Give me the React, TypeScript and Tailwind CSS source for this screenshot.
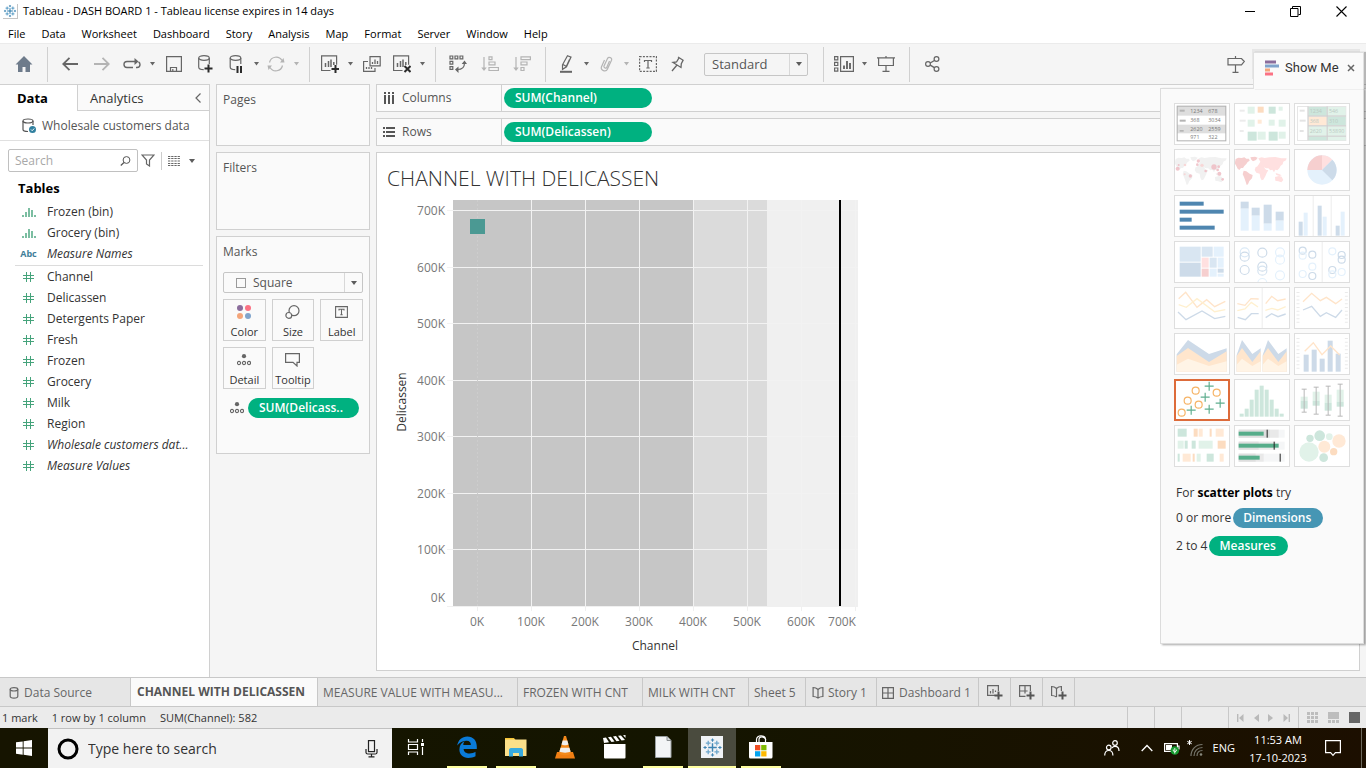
import React from "react";

type Kids = { children?: React.ReactNode };

/* ---------- shared pieces ---------- */

function Glyph({ w = 18, h = 18, className = "", children }: Kids & { w?: number; h?: number; className?: string }) {
  return (
    <svg
      width={w}
      height={h}
      viewBox={`0 0 ${w} ${h}`}
      fill="none"
      stroke="currentColor"
      strokeWidth="1.2"
      className={"shrink-0 " + className}
      aria-hidden="true"
    >
      {children}
    </svg>
  );
}

function Caret({ className = "text-[#5c5c5c]" }: { className?: string }) {
  return (
    <Glyph w={6} h={4} className={className}>
      <path d="M0 0h6L3 4z" fill="currentColor" stroke="none" />
    </Glyph>
  );
}

function Tool({ label, w = "w-8", dim = false, children }: Kids & { label: string; w?: string; dim?: boolean }) {
  return (
    <button aria-label={label} className={`flex h-8 items-center justify-center ${w} ${dim ? "text-[#b4b4b4]" : "text-[#666666]"}`}>
      {children}
    </button>
  );
}

function ToolCaret({ label, dim = false }: { label: string; dim?: boolean }) {
  return (
    <Tool label={label} w="w-3" dim={dim}>
      <Glyph w={5} h={4}>
        <path d="M0 0h5L2.5 3.5z" fill="currentColor" stroke="none" />
      </Glyph>
    </Tool>
  );
}

function ToolGroup({ children }: Kids) {
  return <div className="flex h-[35px] items-center border-r border-[#d0d0d0] pr-[7px] pl-1.5">{children}</div>;
}

function TableauMark({ size, a = "#3f85b3", b = "#6ba5ca" }: { size: number; a?: string; b?: string }) {
  return (
    <svg width={size} height={size} viewBox="0 0 22 22" fill="none" aria-hidden="true" className="shrink-0">
      <path d="M11 6.5v9M6.500 11h9" stroke={a} strokeWidth="1.500" />
      <path d="M6.500 4v5M4 6.500h5M15.500 4v5M13 6.500h5M6.500 13v5M4 15.500h5M15.500 13v5M13 15.500h5" stroke={b} strokeWidth="1.300" />
      <path d="M11 1.500v3.500M9.300 3.200h3.400M11 17v3.500M9.300 18.800h3.400M3.200 9.300v3.400M1.500 11H5M18.800 9.300v3.400M17 11h3.500" stroke={a} strokeWidth="1.100" />
    </svg>
  );
}

/* ---------- title bar and menu ---------- */

const MENUS = ["File", "Data", "Worksheet", "Dashboard", "Story", "Analysis", "Map", "Format", "Server", "Window", "Help"];

function TitleBar() {
  return (
    <header className="bg-white font-['Open_Sans',sans-serif] text-black">
      <div className="flex h-[22px] items-center pl-[3px]">
        <span className="flex size-[15px] items-center justify-center border-r border-b border-[#c4c4c4]">
          <TableauMark size={14} a="#1f73a8" b="#3f8dbd" />
        </span>
        <h1 className="ml-[5px] text-[11px] leading-4">Tableau - DASH BOARD 1 - Tableau license expires in 14 days</h1>
        <div className="ml-auto flex items-center text-black">
          <button aria-label="Minimize" className="flex h-5 w-[45px] items-center justify-center">
            <Glyph w={10} h={10}><path d="M0 5.500h10" strokeWidth="1" /></Glyph>
          </button>
          <button aria-label="Restore" className="flex h-5 w-[46px] items-center justify-center">
            <Glyph w={11} h={11}><path d="M.5 2.500h7.500v8H.5zM2.500 2.500v-2h8v8H8.500" strokeWidth="1" /></Glyph>
          </button>
          <button aria-label="Close" className="mr-0.5 flex h-5 w-[46px] items-center justify-center">
            <Glyph w={11} h={11}><path d="M.5.5l10 10M10.500.5l-10 10" strokeWidth="1.100" /></Glyph>
          </button>
        </div>
      </div>
      <nav className="flex h-[21px] items-center gap-4 pt-0.5 pl-2 text-[11px] leading-4">
        {MENUS.map((m) => (
          <button key={m}>{m}</button>
        ))}
      </nav>
    </header>
  );
}

/* ---------- toolbar ---------- */

function Toolbar() {
  return (
    <div className="flex h-[41px] items-center border-t border-[#ebebeb] bg-[#f5f5f5]">
      <div className="flex h-[35px] w-12 items-center justify-center border-r border-[#d0d0d0]">
        <button aria-label="Home" className="flex h-8 w-8 items-center justify-center text-[#6e7b8b]">
          <Glyph w={18} h={16}><path d="M9 0l8.500 8.500H15V16h-4.500v-5h-3v5H3V8.500H.5z" fill="currentColor" stroke="none" /></Glyph>
        </button>
      </div>
      <ToolGroup>
        <Tool label="Undo"><Glyph w={16} h={14}><path d="M16 7H1.500M7.500.8L1.200 7l6.300 6.200" strokeWidth="1.800" /></Glyph></Tool>
        <Tool label="Redo" dim><Glyph w={16} h={14}><path d="M0 7h14.500M8.500.8L14.800 7l-6.300 6.200" strokeWidth="1.800" /></Glyph></Tool>
        <Tool label="Replay animation" w="w-7">
          <Glyph w={18} h={12}><path d="M10 9.500H4a3 3 0 01-3-3v0a3 3 0 013-3h9M13 9.500h1a3 3 0 003-3c0-1-.5-2-1.500-2.500" strokeWidth="1.400" /><path d="M11.500 0l4 3.500-4 3.500z" fill="currentColor" stroke="none" /></Glyph>
        </Tool>
        <ToolCaret label="Replay speed" />
        <Tool label="Save"><Glyph w={16} h={16}><path d="M.6.6h14.800v14.800H.6zM4.500 15v-3.500h6V15M6.800 15v-2" /></Glyph></Tool>
        <Tool label="New data source">
          <Glyph w={16} h={18}><ellipse cx="6" cy="3" rx="5.300" ry="2.300" /><path d="M.7 3v9c0 1.600 2 2.600 5 2.600M11.300 3v6" /><path d="M10.500 9.500v8M6.500 13.500h8" stroke="#2b2b2b" strokeWidth="2" /></Glyph>
        </Tool>
        <Tool label="Pause auto updates" w="w-7">
          <Glyph w={14} h={18}><ellipse cx="6.500" cy="3" rx="5.300" ry="2.300" /><path d="M1.200 3v9c0 1.600 2 2.600 5 2.600M11.800 3v6" /><path d="M8.500 11v7M12 11v7" stroke="#2b2b2b" strokeWidth="2" /></Glyph>
        </Tool>
        <ToolCaret label="Update options" />
        <Tool label="Refresh" w="w-7" dim>
          <Glyph w={18} h={16}><path d="M2.500 6.500a6.800 6.800 0 0112.500-2M15.500 9.500a6.800 6.800 0 01-12.500 2" /><path d="M13 6.500h4.500L16.500 2zM5 9.500H.5l1 4.500z" fill="currentColor" stroke="none" /></Glyph>
        </Tool>
        <ToolCaret label="Refresh options" dim />
      </ToolGroup>
      <ToolGroup>
        <Tool label="New worksheet" w="w-7">
          <Glyph w={18} h={18}><path d="M9.500 15.500H.6V.8h15v9" /><path d="M4.500 8v4M7.500 6v6M10 4.500V12M12.800 7v3" strokeWidth="1.500" /><path d="M14.500 10v8M10.500 14h8" stroke="#2b2b2b" strokeWidth="2" /></Glyph>
        </Tool>
        <ToolCaret label="New sheet options" />
        <Tool label="Duplicate">
          <Glyph w={18} h={16}><path d="M7 .6h10.200v9.300H7zM5 5.500H.6v9.900H12V12" /><path d="M9.500 6v2M12 3.500V8M14.500 5v3M3.500 11v2M6 11v2M8.500 11v2" strokeWidth="1.300" /></Glyph>
        </Tool>
        <Tool label="Clear sheet" w="w-7">
          <Glyph w={18} h={18}><path d="M9.500 15.500H.6V.8h15v9" /><path d="M4.500 8v4M7.500 6v6M10 4.500V12M12.800 7v3" strokeWidth="1.500" /><path d="M11.500 11l6 6M17.500 11l-6 6" stroke="#2b2b2b" strokeWidth="2" /></Glyph>
        </Tool>
        <ToolCaret label="Clear options" />
      </ToolGroup>
      <ToolGroup>
        <Tool label="Swap rows and columns">
          <Glyph w={18} h={18}><path d="M1 1h2.800v2.800H1zM6 1h2.800v2.800H6zM11 1h2.800v2.800H11zM1 6.300h2.800v2.800H1zM1 11.600h2.800v2.800H1zM15.500 8c0 4-2.500 6.500-7 6.500" /><path d="M12.700 9l2.800-3.500L18 9zM9.500 11.500L6 14.500 9.500 18z" fill="currentColor" stroke="none" /></Glyph>
        </Tool>
        <Tool label="Sort ascending" dim>
          <Glyph w={18} h={16}><path d="M3 1v11M8 .8h3v2.800H8zM8 6h6v2.800H8zM8 11.500h9.400v3H8z" /><path d="M.3 11.500h5.400L3 15z" fill="currentColor" stroke="none" /></Glyph>
        </Tool>
        <Tool label="Sort descending" dim>
          <Glyph w={18} h={16}><path d="M3 1v11M8 .8h9.400v2.800H8zM8 6h6v2.800H8zM8 11.500h3v3H8z" /><path d="M.3 11.500h5.400L3 15z" fill="currentColor" stroke="none" /></Glyph>
        </Tool>
      </ToolGroup>
      <ToolGroup>
        <Tool label="Highlight" w="w-7">
          <Glyph w={14} h={18}><path d="M8.500.8l3.500 1.300-4.500 9.700-4 2.500v-4.500zM4 9.500l3.500 2M10.500 4.500l-3 6.500" /><path d="M1 16.800h12" strokeWidth="2" /></Glyph>
        </Tool>
        <ToolCaret label="Highlight options" />
        <Tool label="Group members" w="w-7" dim>
          <Glyph w={13} h={16}><path d="M4 10l3.500-7.500c1-2 5-1 4 1.800L7.500 13c-1.500 3.500-7.500 1.500-6-2.300L4.500 4M6.500 12l3-7M4 10c-.5 1.500 1.500 2.500 2.500 2" strokeWidth="1.200" /></Glyph>
        </Tool>
        <ToolCaret label="Group options" dim />
        <Tool label="Show mark labels">
          <Glyph w={18} h={16}><path d="M.6.6h16.800v14.800H.6z" strokeDasharray="2 1.300" /><path d="M5.500 6V4.500h7V6M9 4.500v7.500M7.300 12h3.400" /></Glyph>
        </Tool>
        <Tool label="Fix axes" w="w-7">
          <Glyph w={14} h={16}><path d="M7 1l5.500 3.500M8 1.800L5.500 6 2 6.500l8 5 .3-3.800 2-3.800M6 9L1 15" strokeWidth="1.300" /></Glyph>
        </Tool>
        <div className="relative mr-2 ml-3 flex h-[23px] w-[104px] items-center">
          <select aria-label="Fit" className="h-full w-full appearance-none rounded-[2px] border border-[#c6c6c6] bg-[#f5f5f5] pl-[7px] font-['Open_Sans',sans-serif] text-[13px] leading-4 text-[#555555]">
            <option>Standard</option>
          </select>
          <span className="pointer-events-none absolute inset-y-px right-px flex w-[18px] items-center justify-center border-l border-[#d8d8d8]">
            <Caret />
          </span>
        </div>
      </ToolGroup>
      <ToolGroup>
        <Tool label="Show or hide cards" w="w-7">
          <Glyph w={20} h={16}><path d="M.6.6h3.200v3.200H.6zM.6 6.300h3.200v3.200H.6zM.6 12h3.200v3.200H.6zM6.600.6h12.800v14.800H6.600z" /><path d="M10 9.500V13M13 5v8M16 7v6" strokeWidth="1.900" /></Glyph>
        </Tool>
        <ToolCaret label="Card options" />
        <Tool label="Presentation mode">
          <Glyph w={18} h={16}><path d="M0 1.800h18M1.600 2v7.500h14.800V2M9 9.500v6M5.500 15.300h7M9 0v1.500" /></Glyph>
        </Tool>
      </ToolGroup>
      <div className="flex pl-1.5">
        <Tool label="Share">
          <Glyph w={15} h={16}><circle cx="3" cy="8" r="2.400" /><circle cx="11.500" cy="3" r="2.400" /><circle cx="11.500" cy="13" r="2.400" /><path d="M5.200 7l4.200-2.500M5.200 9.200l4.200 2.400" strokeWidth="1.400" /></Glyph>
        </Tool>
      </div>
      <div className="ml-auto flex items-center">
        <Tool label="Guide">
          <Glyph w={18} h={18}><path d="M1 3.500h13.500L17.300 6.500l-2.800 3.300H1zM8.500 1v2.500M8.500 10v7M5.500 17.300h6" /></Glyph>
        </Tool>
        <div className="mr-1.5 h-[30px] w-[108px] bg-[#e6e6e6]" />
      </div>
    </div>
  );
}

/* ---------- data pane ---------- */

type Field = { name: string; kind: "bin" | "abc" | "num"; italic?: boolean };

const DIMENSIONS: Field[] = [
  { name: "Frozen (bin)", kind: "bin" },
  { name: "Grocery (bin)", kind: "bin" },
  { name: "Measure Names", kind: "abc", italic: true },
];

const MEASURES: Field[] = [
  { name: "Channel", kind: "num" },
  { name: "Delicassen", kind: "num" },
  { name: "Detergents Paper", kind: "num" },
  { name: "Fresh", kind: "num" },
  { name: "Frozen", kind: "num" },
  { name: "Grocery", kind: "num" },
  { name: "Milk", kind: "num" },
  { name: "Region", kind: "num" },
  { name: "Wholesale customers dat...", kind: "num", italic: true },
  { name: "Measure Values", kind: "num", italic: true },
];

function FieldIcon({ kind }: { kind: Field["kind"] }) {
  if (kind === "abc") return <span className="text-[9px] leading-4 font-bold text-[#417e99]">Abc</span>;
  if (kind === "bin")
    return (
      <Glyph w={14} h={10} className="text-[#45a37b]">
        <path d="M1 8v2M4 5v5M7 1v9M10 3v7M13 8v2" strokeWidth="1.400" />
      </Glyph>
    );
  return (
    <Glyph w={11} h={10} className="text-[#45a37b]">
      <path d="M3.500 0v10M7.500 0v10M0 3.500h11M0 6.500h11" strokeWidth="1" />
    </Glyph>
  );
}

function FieldRow({ field }: { field: Field }) {
  return (
    <li className="flex h-[21px] items-center">
      <span className="mr-[5px] flex w-[27px] justify-center">
        <FieldIcon kind={field.kind} />
      </span>
      <span className={`whitespace-nowrap ${field.italic ? "italic" : ""}`}>{field.name}</span>
    </li>
  );
}

function DataPane() {
  return (
    <aside className="flex w-[210px] shrink-0 flex-col border-t border-r border-[#d0d0d0] bg-white">
      <div className="flex h-[26px] text-[13px] leading-4">
        <button className="w-[77px] pr-3 font-bold text-black">Data</button>
        <button className="flex flex-1 items-center justify-between border-b border-l border-[#d0d0d0] bg-[#fafafa] pr-2 pl-3 text-[#333333]">
          Analytics
          <Glyph w={6} h={10} className="text-[#666666]"><path d="M5.500.5L1 5l4.500 4.500" /></Glyph>
        </button>
      </div>
      <div className="flex h-[30px] items-center border-b border-[#e0e0e0] pl-[22px] text-xs leading-4 text-[#555555]">
        <Glyph w={15} h={16}>
          <ellipse cx="6" cy="3" rx="5" ry="2" />
          <path d="M1 3v8.500c0 1.300 2 2 5 2M11 3v4" />
          <circle cx="10.500" cy="11.500" r="3.500" fill="#31809f" stroke="none" />
          <path d="M9 11.500l1.200 1.200 2-2.200" stroke="#ffffff" strokeWidth="1" />
        </Glyph>
        <span className="ml-[5px]">Wholesale customers data</span>
      </div>
      <div className="mt-2 flex items-center px-2">
        <div className="relative flex h-[23px] w-[130px] items-center">
          <input
            aria-label="Search fields"
            placeholder="Search"
            className="h-full w-full rounded-[2px] border border-[#c0c0c0] bg-white pl-1.5 text-xs leading-4 placeholder:text-[#a8a8a8]"
          />
          <Glyph w={11} h={10} className="pointer-events-none absolute right-[7px] text-[#555555]">
            <circle cx="6.500" cy="4" r="3.400" strokeWidth="1" />
            <path d="M4 6.500L.8 9.500" />
          </Glyph>
        </div>
        <button aria-label="Filter fields" className="ml-[3px] text-[#666666]">
          <Glyph w={14} h={13}><path d="M1 1h12L8.500 6v6l-3-2V6z" /></Glyph>
        </button>
        <span className="mx-1.5 h-[18px] w-px bg-[#cccccc]" />
        <button aria-label="View options" className="flex items-center gap-[9px] text-[#666666]">
          <Glyph w={12} h={10}><path d="M0 .5h12M0 2.500h12M0 5h12M0 7.500h12M0 9.500h12" strokeDasharray="2.300 .9" strokeWidth="1" /></Glyph>
          <Caret />
        </button>
      </div>
      <h2 className="mt-2 pl-[18px] text-[13px] leading-4 font-bold text-black">Tables</h2>
      <div className="mt-[5px] pr-1.5 pl-[15px] text-xs leading-4 text-[#333333]">
        <ul>{DIMENSIONS.map((f) => <FieldRow key={f.name} field={f} />)}</ul>
        <hr className="mt-px border-[#dcdcdc]" />
        <ul>{MEASURES.map((f) => <FieldRow key={f.name} field={f} />)}</ul>
      </div>
    </aside>
  );
}

/* ---------- cards ---------- */

function Card({ title, className = "", children }: Kids & { title: string; className?: string }) {
  return (
    <section className={"border border-[#d0d0d0] bg-[#fafafa] px-1.5 pt-[7px] text-[#555555] " + className}>
      <h2 className="text-xs leading-4">{title}</h2>
      {children}
    </section>
  );
}

function DetailGlyph() {
  return (
    <Glyph w={14} h={12}>
      <circle cx="7" cy="2.200" r="2.100" fill="currentColor" stroke="none" />
      <circle cx="2" cy="9" r="1.600" strokeWidth="1.100" />
      <circle cx="7" cy="9" r="1.600" strokeWidth="1.100" />
      <circle cx="12" cy="9" r="1.600" strokeWidth="1.100" />
    </Glyph>
  );
}

function MarkButton({ label, children }: Kids & { label: string }) {
  return (
    <button className="flex h-[42px] flex-col items-center border border-[#d0d0d0] text-[11px] leading-4 text-[#333333]">
      <span className="flex h-[25px] items-center text-[#666666]">{children}</span>
      {label}
    </button>
  );
}

function Pill({ className, children }: Kids & { className: string }) {
  return <button className={"h-5 rounded-full text-left text-xs leading-4 font-semibold text-white " + className}>{children}</button>;
}

function Cards() {
  return (
    <div className="flex w-[154px] shrink-0 flex-col gap-1.5">
      <Card title="Pages" className="h-[62px]" />
      <Card title="Filters" className="h-[78px]" />
      <Card title="Marks" className="h-[218px]">
        <div className="relative mt-3 flex h-[21px] items-center">
          <select aria-label="Mark type" className="h-full w-full appearance-none rounded-[2px] border border-[#c6c6c6] bg-[#fafafa] pl-[29px] text-xs leading-4 text-[#555555]">
            <option>Square</option>
          </select>
          <span className="pointer-events-none absolute left-[13px] size-2.5 border border-[#9a9a9a]" />
          <span className="pointer-events-none absolute inset-y-px right-px flex w-[18px] items-center justify-center border-l border-[#d8d8d8]">
            <Caret />
          </span>
        </div>
        <div className="mt-1.5 grid grid-cols-3 gap-1.5">
          <MarkButton label="Color">
            <Glyph w={14} h={14}>
              <circle cx="3" cy="3" r="3" fill="#8b6d9c" stroke="none" />
              <circle cx="11" cy="3" r="3" fill="#fb7284" stroke="none" />
              <circle cx="3" cy="11" r="3" fill="#f4a57a" stroke="none" />
              <circle cx="11" cy="11" r="3" fill="#80a4cc" stroke="none" />
            </Glyph>
          </MarkButton>
          <MarkButton label="Size">
            <Glyph w={15} h={14}><circle cx="9" cy="5.700" r="5" /><circle cx="3.800" cy="10.400" r="2.900" fill="#fafafa" /></Glyph>
          </MarkButton>
          <MarkButton label="Label">
            <Glyph w={13} h={12}><path d="M.6.6h11.800v10.800H.6zM4 4.500V3.300h5v1.200M6.500 3.300v5.400M5.300 8.800h2.400" strokeWidth="1.100" /></Glyph>
          </MarkButton>
          <MarkButton label="Detail"><DetailGlyph /></MarkButton>
          <MarkButton label="Tooltip">
            <Glyph w={15} h={14}><path d="M.6.600h13.800v8.800h-2.400v3.600L8 9.400H.6z" /></Glyph>
          </MarkButton>
        </div>
        <div className="mt-[9px] flex items-center gap-1 pl-[7px] text-[#666666]">
          <DetailGlyph />
          <Pill className="w-[111px] bg-[#00b180] pl-[11px]">SUM(Delicass..</Pill>
        </div>
      </Card>
    </div>
  );
}

/* ---------- shelves and view ---------- */

function Shelf({ label, pill, icon }: { label: string; pill: string; icon: React.ReactNode }) {
  return (
    <div className="flex h-7 shrink-0 border border-r-0 border-[#d0d0d0] bg-[#fafafa]">
      <div className="flex w-[125px] items-center gap-[7px] border-r border-[#d0d0d0] pl-1.5 text-xs leading-4 text-[#555555]">
        {icon}
        {label}
      </div>
      <div className="flex items-center pl-0.5">
        <Pill className="w-[148px] bg-[#00b180] pl-[11px]">{pill}</Pill>
      </div>
    </div>
  );
}

const Y_TICKS = [
  { label: "700K", y: 210 }, { label: "600K", y: 267 }, { label: "500K", y: 323 }, { label: "400K", y: 380 },
  { label: "300K", y: 436 }, { label: "200K", y: 493 }, { label: "100K", y: 549 },
];
const X_TICKS = [
  { label: "0K", x: 477 }, { label: "100K", x: 531 }, { label: "200K", x: 585 }, { label: "300K", x: 639 },
  { label: "400K", x: 693 }, { label: "500K", x: 747 }, { label: "600K", x: 801 }, { label: "700K", x: 855 },
];

function Chart() {
  return (
    <svg
      width="480"
      height="460"
      viewBox="387 196 480 460"
      role="img"
      aria-label="Delicassen by Channel scatter plot"
      shapeRendering="crispEdges"
      className="font-['Open_Sans',sans-serif] text-xs"
    >
      <rect x="453" y="200" width="241" height="406" fill="#c6c6c6" />
      <rect x="694" y="200" width="73" height="406" fill="#dbdbdb" />
      <rect x="767" y="200" width="91" height="406" fill="#f0f0f0" />
      {Y_TICKS.map((t) => (
        <g key={t.label}>
          <rect x="447" y={t.y} width="411" height="1" fill="#f2f2f2" />
          <text x="445" y={t.y + 5} textAnchor="end" fill="#787878">{t.label}</text>
        </g>
      ))}
      <text x="445" y="602" textAnchor="end" fill="#787878">0K</text>
      {X_TICKS.map((t, i) => (
        <g key={t.label}>
          {i > 0 && <rect x={t.x} y="200" width="1" height="406" fill="#f2f2f2" />}
          <rect x={t.x} y="606" width="1" height="5" fill="#f0f0f0" />
          <text x={i === 7 ? 842 : t.x} y="626" textAnchor="middle" fill="#787878">{t.label}</text>
        </g>
      ))}
      <path d="M477.500 200v406" stroke="#cdcdcd" strokeDasharray="2 2" />
      <rect x="447" y="606" width="411" height="1" fill="#f0f0f0" />
      <rect x="839" y="200" width="2" height="406" fill="#000000" />
      <rect x="470" y="219" width="15" height="15" fill="#4b9993" />
      <text x="655" y="650" textAnchor="middle" fill="#333333">Channel</text>
      <text x="406" y="402" textAnchor="middle" fill="#333333" transform="rotate(-90 406 402)">Delicassen</text>
    </svg>
  );
}

function Sheet() {
  return (
    <main className="flex min-w-0 flex-1 flex-col gap-1.5">
      <Shelf
        label="Columns"
        pill="SUM(Channel)"
        icon={<Glyph w={12} h={12}><path d="M2 0v2M6 0v2M10 0v2M2 3v9M6 3v9M10 3v9" strokeWidth="2" /></Glyph>}
      />
      <Shelf
        label="Rows"
        pill="SUM(Delicassen)"
        icon={<Glyph w={12} h={12}><path d="M0 2h2M0 6h2M0 10h2M3 2h9M3 6h9M3 10h9" strokeWidth="2" /></Glyph>}
      />
      <section className="mr-1.5 mb-1.5 flex-1 border border-[#d0d0d0] bg-white pl-2.5">
        <h2 className="pt-[11px] text-[21px] leading-7 font-light text-[#333333]">CHANNEL WITH DELICASSEN</h2>
        <div className="mt-1">
          <Chart />
        </div>
      </section>
    </main>
  );
}

/* ---------- show me ---------- */

const LAND_WEST =
  "M48 208l8-4 10 1 8-2 6 4 8 0 2 6-6 4-4 6-6 6-4 6-6 0-5 6-5-4-4-8-5-8zM92 203l14-2 8 3-5 7-9 4-5-5zM72 243l8 2 10 7 9 4-2 10-8 8-4 10-4 2-3-10-5-14-4-8z";
const LAND_EAST =
  "M116 206l10-3 9 2 14-2 18-1 18 4 16 0-2 6-8 4-2 8-6 4-4 8-6 6-6-2-4 8-5-8-6 2-6-6-7 0-6-3-9-1-8 4-4-5 6-8 4-7zM108 232l14-3 10 3 7 8 7 2-5 8-4 10-6 10-5 2-4-8-2-12-10-3-5-8zM166 262l12-3 8 2 5 10-6 7-9-3-9-2zM168 250l10 3 8 4-6 2-10-3z";

function WorldMap({ dx, west, east }: { dx: number; west: string; east: string }) {
  return (
    <g transform={`translate(${dx} 0)`}>
      <path d={LAND_WEST} fill={west} />
      <path d={LAND_EAST} fill={east} />
    </g>
  );
}

type Box = [number, number, number, number, string];
function Boxes({ items }: { items: Box[] }) {
  return (
    <>
      {items.map(([x, y, w, h, f], i) => (
        <rect key={i} x={x} y={y} width={w} height={h} fill={f} />
      ))}
    </>
  );
}

function Rings({ items, r }: { items: [number, number, string][]; r: number }) {
  return (
    <>
      {items.map(([x, y, c], i) => (
        <circle key={i} cx={x} cy={y} r={r} fill="none" stroke={c} strokeWidth="3.500" />
      ))}
    </>
  );
}

function Lines({ items }: { items: [string, string][] }) {
  return (
    <>
      {items.map(([p, c], i) => (
        <polyline key={i} points={p} fill="none" stroke={c} strokeWidth="4" />
      ))}
    </>
  );
}

function Numbers({ rows, xs, ys, fill }: { rows: string[][]; xs: number[]; ys: number[]; fill: string }) {
  return (
    <g fill={fill} fontSize="16" className="font-['Open_Sans',sans-serif]">
      {rows.map((r, i) => r.map((t, j) => <text key={t} x={xs[j]} y={ys[i]}>{t}</text>))}
    </g>
  );
}

const G1 = "#e1f2e9", G2 = "#cde6dc", O1 = "#ffe9d6", O2 = "#fcdcc0", B1 = "#e4f1fc", B2 = "#cddbe9", B3 = "#d9e6f2", R1 = "#ffe0e0", R2 = "#f6cfcf";
const OR = "#ffe4c9", YE = "#fff0cf", BL = "#cddae8";

type Thumb = { name: string; x: number; y: number; art: React.ReactNode };

const THUMBS: Thumb[] = [
  {
    name: "Text table", x: 43, y: 40,
    art: (
      <>
        <Boxes items={[[52, 49, 147, 105, "#ffffff"], [52, 49, 147, 29, "#dedede"], [52, 105, 147, 26, "#dedede"], [60, 60, 15, 6, "#b5b5b5"], [60, 90, 18, 6, "#b5b5b5"], [60, 121, 12, 5, "#b5b5b5"]]} />
        <rect x="52.500" y="49.500" width="146" height="104" fill="none" stroke="#b0b0b0" strokeWidth="3" />
        <Numbers rows={[["1234", "678"], ["368", "3034"], ["2620", "2559"], ["971", "322"]]} xs={[92, 146]} ys={[70, 98, 124, 148]} fill="#777777" />
      </>
    ),
  },
  {
    name: "Heat map", x: 223, y: 40,
    art: (
      <Boxes items={[[240, 60, 15, 6, "#ececec"], [240, 90, 18, 6, "#ececec"], [240, 121, 12, 6, "#ececec"], [264, 51, 21, 21, G1], [294, 51, 18, 18, O2], [327, 51, 21, 21, G2], [357, 51, 12, 12, G1], [264, 90, 21, 21, G1], [294, 90, 12, 12, O1], [327, 90, 18, 18, G1], [357, 90, 21, 21, G1], [264, 126, 27, 27, G2], [294, 126, 24, 24, G1], [327, 126, 27, 27, G2], [357, 126, 21, 21, G1]]} />
    ),
  },
  {
    name: "Highlight table", x: 403, y: 40,
    art: (
      <>
        <Boxes items={[[412, 49, 148, 105, "#e6e6e6"], [415, 52, 29, 99, "#ffffff"], [447, 52, 54, 26, G2], [504, 52, 54, 26, G1], [447, 81, 54, 26, O1], [504, 81, 54, 26, G2], [447, 110, 54, 28, G1], [504, 110, 54, 28, G1], [447, 141, 54, 11, G2], [504, 141, 54, 11, G1], [420, 60, 15, 6, "#e4e4e4"], [420, 90, 18, 6, "#e4e4e4"], [420, 121, 12, 6, "#e4e4e4"]]} />
        <path d="M445 79h114M445 108.500h114M445 139.500h114M445 50v102M502.500 50v102" stroke="#cfcfcf" strokeWidth="3" />
        <Numbers rows={[["1234", "546"], ["368", "310"], ["2620", "53890"]]} xs={[450, 508]} ys={[69, 99, 130]} fill="#bccac3" />
      </>
    ),
  },
  {
    name: "Symbol map", x: 43, y: 178,
    art: (
      <>
        <WorldMap dx={0} west="#f1f1f1" east="#f1f1f1" />
        {[[54, 237, 6], [57, 226, 3], [76, 226, 4], [116, 214, 5], [113, 225, 4], [127, 227, 5], [163, 232, 8], [177, 231, 4], [174, 241, 4], [179, 252, 6], [138, 244, 4], [75, 254, 3], [92, 259, 5], [189, 269, 4]].map(([x, y, r], i) => (
          <circle key={i} cx={x} cy={y} r={r} fill={i % 3 === 2 && i !== 8 ? "#f8d2d2" : "#eebcc3"} fillOpacity="0.850" />
        ))}
      </>
    ),
  },
  { name: "Filled map", x: 223, y: 178, art: <WorldMap dx={180} west={R2} east={R1} /> },
  {
    name: "Pie chart", x: 403, y: 178,
    art: (
      <>
        <circle cx="487" cy="241" r="44" fill={B1} />
        <path d="M487 241V197a44 44 0 00-44 44z" fill={R2} />
        <path d="M487 241V197a44 44 0 0131 13z" fill={R1} />
        <path d="M487 241l31-31a44 44 0 010 62z" fill={B2} />
      </>
    ),
  },
  { name: "Horizontal bars", x: 43, y: 316, art: <Boxes items={[[60, 336, 72, 12, "#4f86b0"], [60, 360, 132, 12, "#4f86b0"], [60, 384, 36, 12, "#4f86b0"], [60, 408, 105, 12, "#4f86b0"]]} /> },
  {
    name: "Stacked bars", x: 223, y: 316,
    art: <Boxes items={[[243, 336, 24, 21, B2], [243, 357, 24, 66, B1], [276, 354, 24, 24, B2], [276, 378, 24, 45, B1], [312, 345, 24, 57, B2], [312, 402, 24, 21, B1], [348, 366, 24, 27, B2], [348, 393, 24, 30, B1]]} />,
  },
  {
    name: "Side-by-side bars", x: 403, y: 316,
    art: <Boxes items={[[459, 318, 3, 122, "#ececec"], [513, 318, 3, 122, "#ececec"], [417, 396, 12, 42, B2], [432, 369, 12, 69, B1], [474, 348, 12, 90, B2], [489, 381, 12, 57, B1], [528, 408, 12, 30, B2], [543, 366, 12, 72, B1]]} />,
  },
  {
    name: "Treemap", x: 43, y: 454,
    art: <Boxes items={[[60, 471, 63, 45, B3], [60, 519, 63, 42, B2], [126, 471, 33, 30, B3], [162, 471, 30, 30, B1], [126, 504, 21, 30, R1], [150, 504, 21, 30, B3], [174, 504, 18, 30, B1], [126, 537, 21, 24, R2], [150, 537, 21, 24, B1], [174, 537, 18, 12, B2], [174, 552, 18, 9, B1]]} />,
  },
  {
    name: "Circle views", x: 223, y: 454,
    art: <Rings r={13.5} items={[[255, 488, "#dbeaf7"], [255, 501, B2], [255, 541, B2], [308, 489, B2], [308, 531, B2], [308, 543, "#d5e3f0"], [308, 580, B1], [361, 488, B1], [361, 510, B1], [361, 557, B1]]} />,
  },
  {
    name: "Side-by-side circles", x: 403, y: 454,
    art: (
      <>
        <rect x="486" y="456" width="3" height="122" fill="#ececec" />
        <Rings r={10.5} items={[[429, 483, B2], [429, 498, B1], [458, 495, B2], [458, 531, B1], [429, 553, B1], [458, 559, B2], [518, 485, B1], [546, 496, B2], [546, 510, B2], [518, 541, B2], [518, 554, B1], [546, 547, B1]]} />
      </>
    ),
  },
  {
    name: "Lines (continuous)", x: 43, y: 7,
    art: <Lines items={[["57,42 78,23 112,68 141,45 165,66 197,50", OR], ["57,60 80,68 112,42 165,81 197,75", YE], ["55,82 79,105 127,79 165,102 197,95", BL]]} />,
  },
  {
    name: "Lines (discrete)", x: 223, y: 7,
    art: (
      <>
        <rect x="306" y="9" width="3" height="122" fill="#ececec" />
        <Lines items={[["233,57 256,62 274,42 297,43", OR], ["233,78 256,73 275,53 295,67", YE], ["234,98 257,105 275,87 297,87", BL], ["318,57 336,35 354,48 378,43", OR], ["317,77 337,71 354,76 378,66", YE], ["318,99 336,87 355,96 378,88", BL]]} />
      </>
    ),
  },
  {
    name: "Dual lines", x: 403, y: 7,
    art: (
      <>
        <path d="M415 22v94M560 22v94" stroke="#eaeaea" strokeWidth="9" strokeDasharray="3 8.200" />
        <Lines items={[["430,51 456,26 482,48 500,38 528,57 547,43", OR], ["430,76 456,65 482,95 500,84 528,98 547,76", BL]]} />
      </>
    ),
  },
  {
    name: "Area (continuous)", x: 43, y: 145,
    art: (
      <>
        <path d="M51 209l34-43 63 42 53-17v70H51z" fill={BL} />
        <path d="M51 214l34-24 63 42 53-32v61H51z" fill="#ffe6cd" />
        <path d="M51 240l34-18 63 22 53-14v31H51z" fill="#fff4e6" />
      </>
    ),
  },
  {
    name: "Area (discrete)", x: 223, y: 145,
    art: (
      <>
        {[231, 309].map((x) => (
          <g key={x} transform={`translate(${x} 0)`}>
            <path d="M0 211l16-45 31 42 25-17v70H0z" fill={BL} />
            <path d="M0 214l16-24 31 42 25-32v61H0z" fill="#ffe6cd" />
            <path d="M0 240l16-18 31 22 25-14v31H0z" fill="#fff4e6" />
          </g>
        ))}
      </>
    ),
  },
  {
    name: "Dual combination", x: 403, y: 145,
    art: (
      <>
        <path d="M415 160v94M560 160v94" stroke="#eaeaea" strokeWidth="9" strokeDasharray="3 8.200" />
        <Boxes items={[[432, 210, 15, 51, BL], [456, 195, 15, 66, BL], [480, 222, 15, 39, BL], [504, 168, 15, 93, BL], [528, 207, 15, 54, BL]]} />
        <Lines items={[["435,200 461,174 487,210 513,184 540,211", OR]]} />
      </>
    ),
  },
  {
    name: "Scatter plots", x: 43, y: 283,
    art: (
      <>
        <Rings r={10.5} items={[[66, 384, "#f6b365"], [84, 348, "#f6b365"], [108, 318, "#f6b365"], [117, 360, "#f6b365"], [171, 324, "#f6b365"]]} />
        <path d="M135 304.500h27M148.500 291v27M123 337.500h27M136.500 324v27M168 355.500h27M181.500 342v27M135 373.500h27M148.500 360v27M81 376.500h27M94.500 363v27" stroke="#5fae8f" strokeWidth="3.500" />
      </>
    ),
  },
  {
    name: "Histogram", x: 223, y: 283,
    art: <Boxes items={[[240, 387, 12, 9, G2], [255, 372, 12, 24, G2], [270, 345, 12, 51, G2], [285, 315, 12, 81, G2], [300, 303, 12, 93, G2], [315, 315, 12, 81, G2], [330, 345, 12, 51, G2], [345, 372, 12, 24, G2], [360, 387, 12, 9, G2]]} />,
  },
  {
    name: "Box-and-whisker plot", x: 403, y: 283,
    art: (
      <>
        <Boxes items={[[423, 336, 21, 12, G1], [423, 348, 21, 24, G2], [459, 321, 21, 27, G1], [459, 348, 21, 15, G2], [495, 330, 21, 24, G1], [495, 354, 21, 24, G2], [531, 315, 21, 36, G1], [531, 351, 21, 15, G2]]} />
        <path d="M433.500 313v69M426 313.500h15M426 382.500h15M469.500 307v81M462 307.500h15M462 388.500h15M505.500 304v87M498 304.500h15M498 391.500h15M541.500 298v96M534 298.500h15M534 394.500h15" stroke="#b8b8b8" strokeWidth="3" />
      </>
    ),
  },
  {
    name: "Gantt", x: 43, y: 421,
    art: <Boxes items={[[54, 432, 27, 24, G2], [102, 432, 12, 24, O2], [117, 432, 12, 24, O1], [150, 432, 6, 24, O2], [168, 432, 24, 24, O1], [54, 468, 18, 24, G1], [75, 468, 9, 24, G2], [96, 468, 12, 24, G2], [117, 468, 42, 24, G1], [174, 468, 24, 24, O2], [54, 507, 6, 24, G2], [69, 507, 24, 24, O1], [99, 507, 6, 24, O2], [111, 507, 12, 24, G1], [141, 507, 21, 24, G2], [180, 507, 12, 24, O1]]} />,
  },
  {
    name: "Bullet graphs", x: 223, y: 421,
    art: (
      <Boxes items={[[237, 435, 138, 24, "#f5f6f7"], [237, 435, 120, 24, "#e9e9e9"], [237, 435, 93, 24, "#dedede"], [237, 471, 138, 24, "#f5f6f7"], [237, 471, 111, 24, "#e9e9e9"], [237, 471, 60, 24, "#dedede"], [237, 507, 138, 24, "#f5f6f7"], [237, 507, 75, 24, "#e9e9e9"], [237, 507, 51, 24, "#dedede"], [237, 441, 75, 12, "#56ad8a"], [237, 477, 120, 12, "#56ad8a"], [237, 513, 63, 12, "#56ad8a"], [321, 435, 3, 24, "#222222"], [342, 471, 3, 24, "#222222"], [360, 507, 3, 24, "#222222"]]} />
    ),
  },
  {
    name: "Packed bubbles", x: 403, y: 421,
    art: (
      <>
        <circle cx="448" cy="502" r="29" fill={G1} /><circle cx="451" cy="461" r="11" fill={G2} /><circle cx="480" cy="453" r="16" fill={G2} />
        <circle cx="509" cy="456" r="10" fill={G1} /><circle cx="538" cy="469" r="20" fill={O1} /><circle cx="494" cy="486" r="18" fill={O1} />
        <circle cx="522" cy="501" r="11" fill={O2} /><circle cx="492" cy="519" r="13" fill={G2} />
      </>
    ),
  },
];

function ShowMe() {
  return (
    <section aria-label="Show Me" className="absolute top-[52px] right-0.5 flex w-[204px] flex-col text-xs leading-4 text-[#333333]">
      <div className="relative z-10 flex h-[37px] w-[111px] items-center self-end border border-b-0 border-[#e0e0e0] bg-[#fafafa] pb-1.5 pl-[11px] shadow-[2px_0_1px_rgba(0,0,0,0.250)]">
        <Glyph w={14} h={16}>
          <path d="M0 2h11" stroke="#8b6d9c" strokeWidth="3" />
          <path d="M0 6h14" stroke="#80a4cc" strokeWidth="3" />
          <path d="M0 10h5" stroke="#f4a57a" strokeWidth="3" />
          <path d="M0 14h8" stroke="#fb7284" strokeWidth="3" />
        </Glyph>
        <h2 className="ml-1.5 font-['Roboto',sans-serif] text-[13px] leading-4">Show Me</h2>
        <button aria-label="Close Show Me" className="ml-2 text-[#666666]">
          <Glyph w={8} h={8}><path d="M1 1l6 6M7 1L1 7" strokeWidth="1.500" /></Glyph>
        </button>
      </div>
      <div className="-mt-px h-[556px] border border-[#dcdcdc] bg-[#fafafa] px-[13px] pt-3.5 shadow-[2px_1px_2px_rgba(0,0,0,0.350)]">
        <div className="grid grid-cols-3 gap-1">
          {THUMBS.map((t) => (
            <button
              key={t.name}
              aria-label={t.name}
              className={`h-[42px] overflow-hidden bg-white ${t.name === "Scatter plots" ? "border-2 border-[#dd6b3a]" : "border border-[#dedede]"}`}
            >
              <svg
                width="100%"
                height="100%"
                viewBox={t.name === "Scatter plots" ? `${t.x + 6} ${t.y + 6} 156 114` : `${t.x + 3} ${t.y + 3} 162 120`}
                aria-hidden="true"
              >
                {t.art}
              </svg>
            </button>
          ))}
        </div>
        <div className="pt-[18px] pl-0.5">
          <p>For <b className="font-bold text-black">scatter plots</b> try</p>
          <p className="mt-[7px] flex items-center gap-0.5">0 or more <Pill className="w-[90px] bg-[#4696b4] pl-2.5">Dimensions</Pill></p>
          <p className="mt-2 flex items-center gap-0.5">2 to 4 <Pill className="w-[79px] bg-[#00b180] pl-2.5">Measures</Pill></p>
        </div>
      </div>
    </section>
  );
}

/* ---------- sheet tabs and status ---------- */

const BOOK = "M.6 1.500C2 1.500 4 2 5.500 3.500 7 2 9 1.500 10.400 1.500v9C9 10.500 7 11 5.500 12 4 11 2 10.500.6 10.500zM5.500 3.500V12";
const DASH = "M.6.6h10.800v10.800H.6zM6 .6v10.800M.6 6h10.800";

function SheetTab({ w, children }: Kids & { w: string }) {
  return <button className={`flex items-center gap-1 border-r border-[#c8c8c8] pt-px pl-[5px] whitespace-nowrap ${w}`}>{children}</button>;
}

function SheetTabs() {
  return (
    <nav className="flex h-[30px] border-y border-[#c8c8c8] bg-[#e6e6e6] text-xs leading-4 text-[#666666]">
      <button className="flex w-[131px] items-center gap-[5px] border-r border-[#c8c8c8] pt-px pl-[9px]">
        <Glyph w={10} h={12}><ellipse cx="5" cy="2.300" rx="3.800" ry="1.700" /><path d="M1.200 2.300v7c0 1 1.500 1.800 3.800 1.800s3.800-.8 3.800-1.800v-7" /></Glyph>
        Data Source
      </button>
      <button className="w-[187px] border-r border-[#c8c8c8] bg-[#fafafa] pl-1.5 text-left font-bold whitespace-nowrap text-[#555555]">CHANNEL WITH DELICASSEN</button>
      <SheetTab w="w-[200px]">MEASURE VALUE WITH MEASU...</SheetTab>
      <SheetTab w="w-[125px]">FROZEN WITH CNT</SheetTab>
      <SheetTab w="w-[106px]">MILK WITH CNT</SheetTab>
      <SheetTab w="w-[57px]">Sheet 5</SheetTab>
      <SheetTab w="w-[71px]"><Glyph w={13} h={13}><path d={BOOK} transform="translate(1.500 0)" /></Glyph>Story 1</SheetTab>
      <SheetTab w="w-[102px]"><Glyph w={13} h={12}><path d={DASH} /></Glyph>Dashboard 1</SheetTab>
      {[
        { label: "New Worksheet", art: <><path d="M8 10.400H.6V.6h10.800V6" /><path d="M3.500 6v2.500M6 4v4.500M8.500 5.500V7" /></> },
        { label: "New Dashboard", art: <path d="M6.500 11.400H.6V.6h10.800V6M6 .6v8M.6 6h8" /> },
        { label: "New Story", art: <path d="M5.500 12C4 11 2 10.500.6 10.500v-9C2 1.500 4 2 5.500 3.500 7 2 9 1.500 10.400 1.500V6M5.500 3.500V12" /> },
      ].map((n) => (
        <button key={n.label} aria-label={n.label} className="flex w-8 items-center justify-center border-r border-[#c8c8c8]">
          <Glyph w={16} h={15}>{n.art}<path d="M11.500 6.500v8M7.500 10.500h8" stroke="#555555" strokeWidth="2" /></Glyph>
        </button>
      ))}
    </nav>
  );
}

function StatusBar() {
  return (
    <footer className="flex h-[21px] items-stretch bg-[#ebebeb] text-[11px] leading-4 text-[#333333]">
      <div className="flex items-center gap-3.5 pl-0.5">
        <span>1 mark</span>
        <span>1 row by 1 column</span>
        <span>SUM(Channel): 582</span>
      </div>
      <div className="ml-auto w-[27px] border-l border-[#c8c8c8]" />
      <div className="w-[27px] border-l border-[#c8c8c8]" />
      <div className="w-[47px] border-l border-[#c8c8c8]" />
      <div className="flex w-[71px] items-center justify-between border-x border-[#c8c8c8] px-2 text-[#b9b9b9]">
        <Glyph w={7} h={8}><path d="M.7 0v8" strokeWidth="1.400" /><path d="M6.500 0v8L2 4z" fill="currentColor" stroke="none" /></Glyph>
        <Glyph w={5} h={8}><path d="M5 0v8L0 4z" fill="currentColor" stroke="none" /></Glyph>
        <Glyph w={5} h={8}><path d="M0 0v8l5-4z" fill="currentColor" stroke="none" /></Glyph>
        <Glyph w={7} h={8}><path d="M6.300 0v8" strokeWidth="1.400" /><path d="M.5 0v8L5 4z" fill="currentColor" stroke="none" /></Glyph>
      </div>
      <div className="flex w-[67px] items-center gap-2.5 pl-2">
        <Glyph w={11} h={11} className="text-[#bdbdbd]"><path d="M0 1.500h11M0 5.500h11M0 9.500h11" strokeWidth="3" strokeDasharray="3 1" /></Glyph>
        <Glyph w={11} h={11} className="text-[#bdbdbd]"><path d="M0 3.500h11" strokeWidth="7" /><path d="M0 9.500h11" strokeWidth="3" strokeDasharray="3 1" /></Glyph>
        <span className="size-[11px] bg-[#666666]" />
      </div>
    </footer>
  );
}

/* ---------- taskbar ---------- */

function TaskButton({ label, w, bar = false, active = false, children }: Kids & { label: string; w: string; bar?: boolean; active?: boolean }) {
  return (
    <button
      aria-label={label}
      className={`flex h-full items-center justify-center border-b-2 ${w} ${bar ? "border-[#ffffa0]" : "border-transparent"} ${active ? "bg-[#4a4b3e]" : ""}`}
    >
      {children}
    </button>
  );
}

function Taskbar() {
  return (
    <div className="flex h-10 items-center bg-linear-to-r from-[#161400] via-[#141500] to-[#1c0f00] font-['Open_Sans',sans-serif] text-white">
      <button aria-label="Start" className="flex h-full w-12 items-center justify-center">
        <Glyph w={16} h={16}><path d="M0 2.300L6.700 1.400v6.200H0zM7.600 1.300L16 0v7.600H7.600zM0 8.500h6.700v6.200L0 13.800zM7.600 8.500H16V16l-8.400-1.200z" fill="#ffffff" stroke="none" /></Glyph>
      </button>
      <div className="flex h-full w-[344px] items-center border-t border-[#c0c0c0] bg-[#f2f2f2] pr-3.5 pl-[9px]">
        <Glyph w={22} h={22} className="text-black"><circle cx="11" cy="11" r="9" strokeWidth="3" /></Glyph>
        <input aria-label="Search Windows" placeholder="Type here to search" className="ml-[9px] min-w-0 flex-1 bg-transparent text-sm leading-5 placeholder:text-[#333333]" />
        <Glyph w={13} h={18} className="text-[#222222]"><rect x="3.500" y=".6" width="6" height="11" /><path d="M1 9v3.500c0 1 .8 1.500 1.800 1.500h7.400c1 0 1.800-.5 1.800-1.500V9M6.500 14v2.500M3.500 16.800h6" /></Glyph>
      </div>
      <TaskButton label="Task View" w="w-12">
        <Glyph w={18} h={16}><path d="M1.500 0v3h9V0M1.500 16v-3h9v3M1.500 5.500h9v5h-9zM15.500 0v3M15.500 8v8" /><path d="M14 4h3v3h-3z" fill="currentColor" stroke="none" /></Glyph>
      </TaskButton>
      <span className="w-[7px]" />
      <TaskButton label="Edge" w="w-10" bar>
        <svg width="22" height="22" viewBox="0 0 22 22" aria-hidden="true">
          <path fill="#0a7bd8" d="M1.200 9.600C2 4 6 .4 11.300.4c6 0 9.500 4.300 9.500 10v2.500H7.600c.2 3 2.700 4.500 5.900 4.500 2.300 0 4.400-.6 6-1.700v4.600c-2 1.200-4.500 1.700-7.200 1.700-5.500 0-8.900-3.400-8.900-8.400 0-4 2.100-7 5.300-8.500-1.100 1.300-1.300 2.700-1.400 4h7.600c0-2.700-1.300-4.300-4.200-4.300-4 0-7.200 2-9.500 4.800z" />
        </svg>
      </TaskButton>
      <span className="w-[9px]" />
      <TaskButton label="File Explorer" w="w-10" bar>
        <svg width="22" height="19" viewBox="0 0 22 19" aria-hidden="true">
          <path fill="#f5c536" d="M0 0h9l1.500 2H0z" /><rect y="1.500" width="21.500" height="16.500" fill="#fbe08a" /><path fill="#38abe0" d="M4 18.500V12c0-1 .7-2 2-2h10c1.300 0 2 1 2 2v6.500h-4V15H8v3.500z" />
        </svg>
      </TaskButton>
      <span className="w-[9px]" />
      <TaskButton label="VLC" w="w-10">
        <svg width="20" height="24" viewBox="0 0 20 24" aria-hidden="true">
          <path fill="#f07f13" d="M2 17h16l2 6.500H0z" /><path fill="#f48a1c" d="M9 1h2l5 17c-1 3-11 3-12 0z" /><path fill="#efefef" d="M7.700 5.500h4.600l1.200 4c-1.500 1-5.500 1-7 0zM5.600 12.700h8.800l1.200 3.800c-2 1.500-9 1.500-11.200 0z" />
        </svg>
      </TaskButton>
      <span className="w-[9px]" />
      <TaskButton label="Movies" w="w-10">
        <svg width="23" height="24" viewBox="0 0 23 24" fill="#ffffff" aria-hidden="true">
          <path d="M1 9h21.500v13.500a1 1 0 01-1 1H2a1 1 0 01-1-1zM0 3l3-.5 3 4.800-5 .7zM5 2.200l3-.4 3.500 4.700-3 .4zM10 1.500l3-.4 3.500 4.700-3 .4zM15 .8l3-.4L22 5l-3.500.5zM20 .2l2.500-.2v3z" />
        </svg>
      </TaskButton>
      <span className="w-[9px]" />
      <TaskButton label="Document" w="w-10" bar>
        <svg width="17" height="22" viewBox="0 0 17 22" aria-hidden="true">
          <path d="M.5.5h11.500l4 4v17H.5z" fill="#f3f5f6" stroke="#9aa0a2" /><path d="M12 .5v4h4" fill="#d3d8da" stroke="#8a8f91" />
        </svg>
      </TaskButton>
      <span className="w-[5px]" />
      <TaskButton label="Tableau" w="w-12" bar active>
        <span className="flex size-[22px] items-center justify-center bg-[#f0f3f6]"><TableauMark size={21} /></span>
      </TaskButton>
      <span className="w-[5px]" />
      <TaskButton label="Microsoft Store" w="w-10" bar>
        <svg width="24" height="24" viewBox="0 0 24 24" aria-hidden="true">
          <path d="M7.500 8V4.500c0-5 9-5 9 0V8M10 8V4.500c0-3.500 5-3.500 7 0" fill="none" stroke="#ffffff" strokeWidth="1.200" />
          <path d="M0 7h23.500v15a1.500 1.500 0 01-1.500 1.500H1.500A1.500 1.500 0 010 22z" fill="#ffffff" />
          <path d="M6 10h5.300v5.300H6z" fill="#f04e23" /><path d="M12.200 10h5.300v5.300h-5.300z" fill="#80bb03" /><path d="M6 16.200h5.300v5.300H6z" fill="#04a4ef" /><path d="M12.200 16.200h5.300v5.300h-5.300z" fill="#fdb900" />
        </svg>
      </TaskButton>
      <div className="ml-auto flex h-full items-center">
        <button aria-label="People"><Glyph w={16} h={16}><circle cx="4.800" cy="7.500" r="2.300" /><path d="M.7 15.500c0-3.700 1.500-5 4.100-5s4.100 1.300 4.100 5" /><circle cx="11" cy="3" r="2.300" /><path d="M8 8c.7-1.200 1.700-1.700 3-1.700 2.600 0 4 1.500 4 4.700" /></Glyph></button>
        <button aria-label="Show hidden icons" className="ml-[21px]"><Glyph w={12} h={8}><path d="M.7 7L6 1.500 11.300 7" strokeWidth="1.300" /></Glyph></button>
        <button aria-label="Battery" className="ml-[11px]">
          <Glyph w={17} h={14}><path d="M.6 2.600h12.800v7.800H.6zM14 5h1v3h-1" /><path d="M2 4h6v5H2z" fill="currentColor" stroke="none" /><circle cx="10.800" cy="9.500" r="4.300" fill="#169a2f" stroke="none" /><path d="M10.800 7v5.500M9.300 8.500v1.500l1.500 1 1.500-1V8.500" strokeWidth=".9" /></Glyph>
        </button>
        <button aria-label="Network" className="ml-1.5">
          <Glyph w={16} h={16}><path d="M4 16C4 9.500 8.500 4.500 15.500 4.500M7 16c0-5 3.500-8.500 8.500-8.500M10 16c0-3.500 2-5.500 5.500-5.500" stroke="#77776c" /><circle cx="14" cy="14.500" r="1.300" fill="#88887c" stroke="none" /><path d="M2.500 0v5M.3 1.300l4.400 2.500M4.700 1.300L.3 3.800" strokeWidth="1" /></Glyph>
        </button>
        <button className="ml-2.5 text-[11px] leading-4">ENG</button>
        <button className="ml-2 flex w-[70px] flex-col items-center pt-px text-[11px] leading-[18px] whitespace-nowrap"><span>11:53 AM</span><span>17-10-2023</span></button>
        <button aria-label="Notifications" className="ml-3"><Glyph w={16} h={17}><path d="M.6.6h14.800v12h-5L8 15.300l-2.400-2.700h-5z" /></Glyph></button>
        <span className="mr-1 ml-5 h-full w-px bg-[#6c685c]" />
      </div>
    </div>
  );
}

export default function App() {
  return (
    <div className="relative flex min-h-screen flex-col bg-[#f5f5f5] font-['Open_Sans',sans-serif]">
      <TitleBar />
      <Toolbar />
      <div className="flex flex-1 gap-1.5">
        <DataPane />
        <Cards />
        <Sheet />
      </div>
      <SheetTabs />
      <StatusBar />
      <Taskbar />
      <ShowMe />
    </div>
  );
}
